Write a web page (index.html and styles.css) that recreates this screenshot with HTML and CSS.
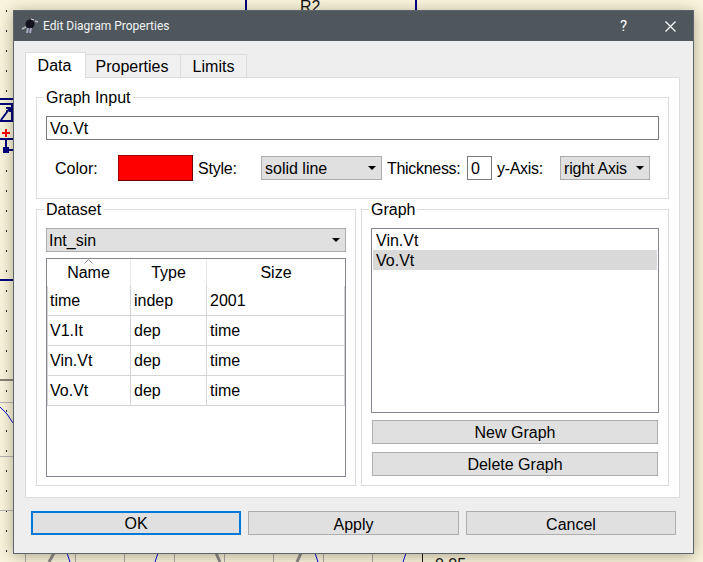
FILE: index.html
```html
<!DOCTYPE html>
<html>
<head>
  <meta charset="UTF-8">
  <meta name="viewport" content="width=device-width,initial-scale=1.0">
  <title>Edit Diagram Properties</title>
  <link rel="stylesheet" href="styles.css">
</head>
<body>
  <!-- schematic behind the dialog -->
  <svg class="canvas" width="703" height="562" viewBox="0 0 703 562">
    <defs>
      <pattern id="dots" x="6" y="10" width="20" height="20" patternUnits="userSpaceOnUse">
        <rect width="1" height="2" fill="#222"></rect>
      </pattern>
    </defs>
    <rect x="0" y="0" width="13" height="562" fill="url(#dots)"></rect>
    <g fill="none" stroke="#00007f" stroke-width="2">
      <path d="M246 0V10M416 0V10M0 280H13"></path>
      <path d="M0 99H13M0 104H12V121H0M1 120L10 108M6 108H10V112"></path>
      <path d="M0 139H13M6 139V150H13"></path>
    </g>
    <rect x="3" y="147" width="6" height="6" fill="#00007f"></rect>
    <path d="M2 133H10M6 129V137" stroke="#f00" stroke-width="2"></path>
    <path d="M0 380H13" stroke="#111"></path>
    <path d="M0 402.5H13M0 456.5H13M0 510.5H13" stroke="#b4b4b4"></path>
    <path d="M25.5 553V562M75.5 553V562M124.5 553V562M174.5 553V562M224.5 553V562M273.5 553V562M323.5 553V562M372.5 553V562" stroke="#a8a8a8"></path>
    <path d="M422.5 553V562" stroke="#111"></path>
    <path d="M0 407L7 414L13 423M67 553L70 562M158 553L155 562M315 553L318 562M406 553L403 562" fill="none" stroke="#0000e6"></path>
    <path d="M54 553L49 562M216 553L220 562M301 553L297 562" fill="none" stroke="#8a8a8a" stroke-width="3"></path>
    <text x="300" y="12" class="canvas-text">R2</text>
    <text x="435" y="570" class="canvas-text">0.05</text>
  </svg>

  <div class="dialog">
    <div class="titlebar">
      <svg class="app-icon" width="18" height="16" viewBox="0 0 18 16">
        <path d="M1 11L5 9M14 3L17 4" stroke="#b8bcc0" stroke-width="1.5"></path>
        <circle cx="9" cy="6" r="4.5" fill="#14121e"></circle>
        <path d="M7 10L6 15M10 10L9 15" stroke="#a9a6c2" stroke-width="2"></path>
        <path d="M10 1L13 2" stroke="#d8dade"></path>
      </svg>
      <span class="title">Edit Diagram Properties</span>
      <span class="help">?</span>
      <svg class="close" width="11" height="11" viewBox="0 0 11 11">
        <path d="M0.5 0.5L10.5 10.5M10.5 0.5L0.5 10.5" stroke="#fff" stroke-width="1.2"></path>
      </svg>
    </div>

    <div class="tabs">
      <div class="tab tab-active tab-data">Data</div>
      <div class="tab tab-props">Properties</div>
      <div class="tab tab-limits">Limits</div>
    </div>

    <div class="pane">
      <fieldset class="group">
        <legend>Graph Input</legend>
        <div class="field field-input">Vo.Vt</div>
        <div class="style-row">
          <span class="lbl lbl-color">Color:</span>
          <div class="swatch"></div>
          <span class="lbl lbl-style">Style:</span>
          <div class="combo combo-style"><span>solid line</span><i class="arrow"></i></div>
          <span class="lbl lbl-thick">Thickness:</span>
          <div class="field field-thick">0</div>
          <span class="lbl lbl-axis">y-Axis:</span>
          <div class="combo combo-axis"><span class="axis-text">right Axis</span><i class="arrow"></i></div>
        </div>
      </fieldset>

      <div class="columns">
        <fieldset class="group group-dataset">
          <legend>Dataset</legend>
          <div class="combo combo-dataset"><span>Int_sin</span><i class="arrow"></i></div>
          <div class="table-box">
            <table class="vars">
              <colgroup><col class="col-name"><col class="col-type"><col class="col-size"></colgroup>
              <thead>
                <tr>
                  <th class="sorted">Name
                    <svg class="sort" width="9" height="5" viewBox="0 0 9 5"><path d="M0.5 4.5L4.5 0.5L8.5 4.5" fill="none" stroke="#8a8a8a"></path></svg>
                  </th>
                  <th>Type</th>
                  <th>Size</th>
                </tr>
              </thead>
              <tbody>
                <tr><td>time</td><td>indep</td><td>2001</td></tr>
                <tr><td>V1.It</td><td>dep</td><td>time</td></tr>
                <tr><td>Vin.Vt</td><td>dep</td><td>time</td></tr>
                <tr><td>Vo.Vt</td><td>dep</td><td>time</td></tr>
              </tbody>
            </table>
          </div>
        </fieldset>

        <fieldset class="group group-graph">
          <legend>Graph</legend>
          <div class="list">
            <div class="list-item">Vin.Vt</div>
            <div class="list-item list-item-selected">Vo.Vt</div>
          </div>
          <button class="btn btn-graph btn-new">New Graph</button>
          <button class="btn btn-graph btn-delete">Delete Graph</button>
        </fieldset>
      </div>
    </div>

    <div class="footer">
      <button class="btn btn-ok">OK</button>
      <button class="btn btn-apply">Apply</button>
      <button class="btn btn-cancel">Cancel</button>
    </div>
  </div>
</body>
</html>
```

FILE: styles.css
```css
* {
  box-sizing: border-box;
}

html, body {
  height: 562px;
}

body {
  margin: 0;
  padding: 10px 0 0 13px;
  overflow: hidden;
  background: #f9f4dd;
  font-family: "Liberation Sans", Arial, sans-serif;
  font-size: 16px;
  color: #000;
}

.canvas {
  position: absolute;
  left: 0;
  top: 0;
}

.canvas-text {
  font-family: "Liberation Sans", Arial, sans-serif;
  font-size: 16px;
  fill: #111;
}

.dialog {
  position: relative;
  width: 681px;
  height: 544px;
  background: #eee;
  border: 1px solid #5c656b;
  box-shadow: 0 2px 14px rgba(50, 40, 10, 0.38);
}

.titlebar {
  display: flex;
  align-items: center;
  height: 30px;
  background: #4f575d;
  color: #fff;
}

.app-icon {
  margin-left: 7px;
}

.title {
  margin-left: 4px;
  font-family: Roboto, sans-serif;
  font-size: 12px;
  color: #f2f3f3;
}

.help {
  margin-left: auto;
  font-family: Roboto, sans-serif;
  font-size: 15px;
}

.close {
  margin: 0 17px 0 38px;
}

.tabs {
  position: relative;
  display: flex;
  align-items: flex-end;
  height: 26px;
  margin: 11px 0 -1px 11px;
}

.tab {
  height: 24px;
  line-height: 23px;
  text-align: center;
  background: #f0f0f0;
  border: 1px solid #dcdcdc;
  border-left: 0;
}

.tab-active {
  height: 26px;
  line-height: 26px;
  background: #fff;
  border-left: 1px solid #dcdcdc;
  border-bottom: 0;
}

.tab-data {
  width: 61px;
  padding-right: 2px;
}

.tab-props {
  width: 95px;
  padding-right: 2px;
}

.tab-limits {
  width: 66px;
}

.pane {
  width: 655px;
  height: 421px;
  margin-left: 11px;
  padding: 10px 10px 0;
  background: #fff;
  border: 1px solid #dcdcdc;
}

.group {
  min-width: 0;
  margin: 0;
  padding: 10px 9px 17px;
  border: 1px solid #dcdcdc;
}

.group legend {
  height: 18px;
  margin-left: -2px;
  padding: 0 2px;
  line-height: 20px;
}

.field {
  height: 24px;
  padding-left: 3px;
  line-height: 24px;
  background: #fff;
  border: 1px solid #7a7a7a;
}

.field-input {
  width: 613px;
}

.style-row {
  display: flex;
  align-items: center;
  height: 26px;
  margin-top: 15px;
}

.lbl {
  padding-top: 2px;
}

.lbl-color {
  width: 63px;
  margin-left: 9px;
}

.swatch {
  width: 75px;
  height: 26px;
  background: #f00;
  border: 1px solid #a00000;
  border-right-color: #6d0000;
  border-bottom-color: #6d0000;
}

.lbl-style {
  width: 63px;
  margin-left: 5px;
  letter-spacing: -0.2px;
}

.lbl-thick {
  width: 80px;
  margin-left: 5px;
  letter-spacing: -0.3px;
}

.lbl-axis {
  width: 63px;
  margin-left: 5px;
  letter-spacing: -0.3px;
}

.field-thick {
  width: 25px;
}

.combo {
  display: flex;
  align-items: center;
  justify-content: space-between;
  height: 24px;
  padding: 2px 5px 0 3px;
  background: #e0e0e0;
  border: 1px solid #adadad;
}

.combo .arrow {
  margin-top: -2px;
}

.combo-style {
  width: 121px;
}

.combo-axis {
  width: 90px;
}

.axis-text {
  letter-spacing: -0.2px;
}

.combo-dataset {
  width: 300px;
  padding-left: 2px;
}

.arrow {
  width: 0;
  height: 0;
  border-left: 4px solid transparent;
  border-right: 4px solid transparent;
  border-top: 4px solid #000;
}

.columns {
  display: grid;
  grid-template-columns: 320px 308px;
  gap: 5px;
  margin-top: 1px;
}

.group-dataset, .group-graph {
  padding-bottom: 8px;
}

.table-box {
  width: 300px;
  height: 219px;
  margin-top: 6px;
  background: #fff;
  border: 1px solid #828790;
}

.vars {
  width: 298px;
  table-layout: fixed;
  border-collapse: separate;
  border-spacing: 0;
}

.col-name {
  width: 84px;
}

.col-type {
  width: 76px;
}

.col-size {
  width: 138px;
}

.vars th {
  height: 27px;
  padding: 0;
  font-weight: normal;
  border-right: 1px solid #e8e8e8;
}

.vars th:last-child {
  border-right: 0;
}

.sorted {
  position: relative;
}

.sort {
  position: absolute;
  left: 37px;
  top: 0;
}

.vars td {
  height: 30px;
  padding: 0 0 0 3px;
  border-right: 1px solid #d4d4d4;
  border-bottom: 1px solid #d4d4d4;
}

.vars td:first-child {
  padding-left: 2px;
  border-left: 1px solid #d4d4d4;
}

.list {
  width: 288px;
  height: 185px;
  padding: 1px;
  background: #fff;
  border: 1px solid #828790;
}

.list-item {
  height: 20px;
  padding-left: 3px;
  line-height: 22px;
}

.list-item-selected {
  background: #d9d9d9;
}

.btn {
  display: block;
  height: 24px;
  padding: 2px 0 0;
  font: inherit;
  color: #000;
  background: #e0e0e0;
  border: 1px solid #adadad;
}

.btn-graph {
  width: 286px;
  margin-left: 1px;
}

.btn-new {
  margin-top: 7px;
}

.btn-delete {
  margin-top: 8px;
}

.footer {
  display: flex;
  gap: 7px;
  margin: 13px 0 0 17px;
}

.footer .btn {
  padding-top: 4px;
}

.footer .btn-ok {
  width: 210px;
  padding-top: 2px;
  border: 2px solid #0078d7;
}

.btn-apply {
  width: 211px;
}

.btn-cancel {
  width: 210px;
}
```
